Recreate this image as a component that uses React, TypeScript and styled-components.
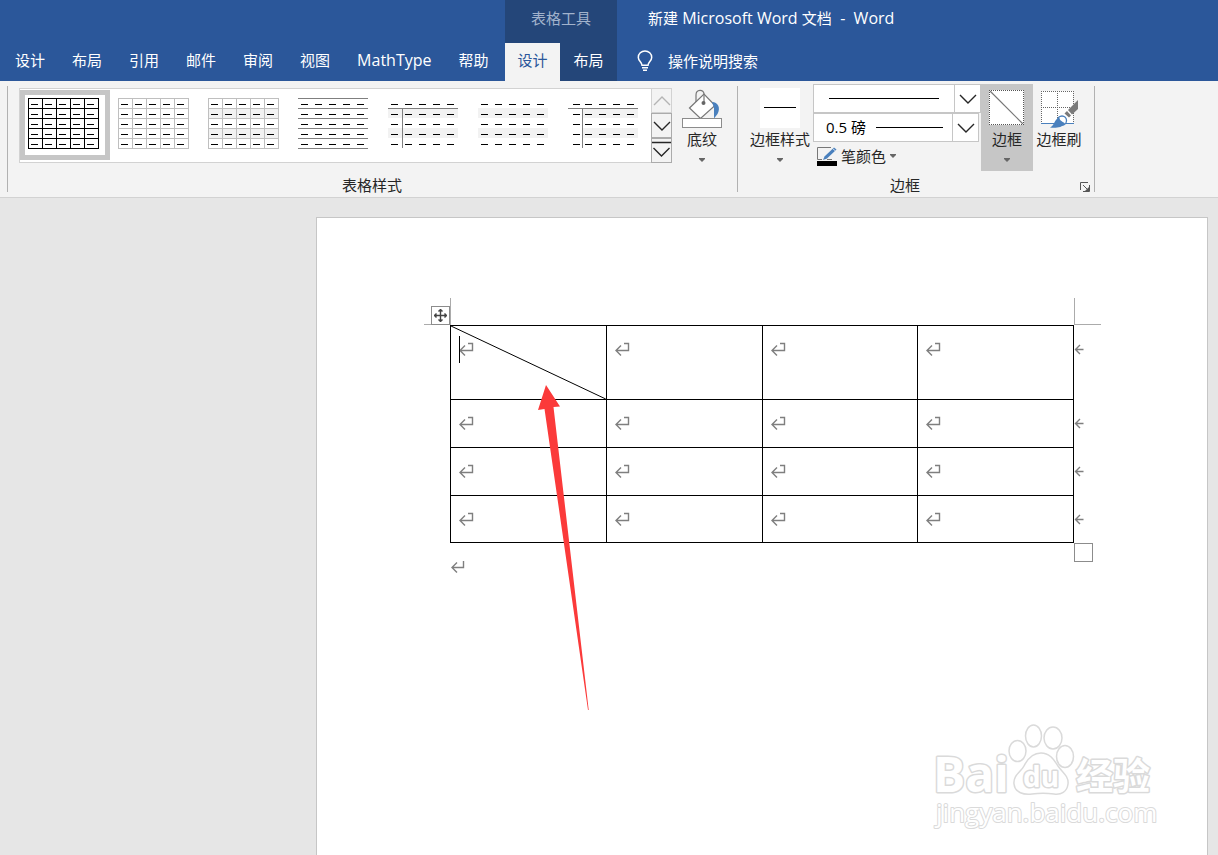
import React from 'react';
import styled, { createGlobalStyle, css } from 'styled-components';

const GlobalStyle = createGlobalStyle`
  *, *::before, *::after { box-sizing: border-box; }
  body {
    margin: 0;
    background: #e6e6e6;
    font-family: "Open Sans", "Noto Sans CJK SC", sans-serif;
    font-size: 15px;
    color: #262626;
  }
  button, select { font: inherit; color: inherit; }
  svg { display: block; }
`;

const AppFrame = styled.div`
  display: flex;
  flex-direction: column;
  min-height: 100vh;
`;

/* ---------- header ---------- */

const Header = styled.header`
  display: flex;
  height: 81px;
  background: #2b579a;
  color: #fff;
  white-space: nowrap;
`;

const TabList = styled.nav`
  display: flex;
  flex: 0 0 505px;
  align-self: flex-end;
  gap: 27px;
  padding-left: 15px;
`;

const Tab = styled.button<{ $active?: boolean; $width?: number }>`
  height: 38px;
  padding: 0 0 4px;
  border: 0;
  background: transparent;
  color: #fff;
  line-height: 20px;
  ${({ $width }) => $width && css`width: ${$width}px;`}
  ${({ $active }) => $active && css`
    background: #f3f3f3;
    color: #2b579a;
  `}
`;

const Latin = styled.span`
  font-size: 16px;
`;

const ContextGroup = styled.div`
  display: flex;
  flex-direction: column;
  flex: 0 0 112px;
  background: #244679;
`;

const ContextTitle = styled.div`
  height: 43px;
  padding-top: 8px;
  line-height: 20px;
  text-align: center;
  color: #a2b3cc;
`;

const ContextTabs = styled.div`
  display: flex;
`;

const TitleColumn = styled.div`
  flex: 1;
  min-width: 0;
`;

const DocTitle = styled.div`
  height: 43px;
  padding: 8px 0 0 31px;
  line-height: 20px;
  white-space: pre;
`;

const TellMe = styled.button`
  display: flex;
  align-items: center;
  gap: 15px;
  height: 38px;
  padding: 0 0 3px 20px;
  border: 0;
  background: transparent;
  color: #fff;
`;

/* ---------- ribbon ---------- */

const Ribbon = styled.div`
  display: flex;
  height: 117px;
  padding-left: 7px;
  background: #f3f3f3;
  border-bottom: 1px solid #d2d2d2;
  white-space: nowrap;
`;

const Separator = styled.div`
  flex: none;
  width: 1px;
  height: 106px;
  margin-top: 5px;
  background: #b1b1b1;
`;

const Group = styled.section<{ $start: number; $end: number }>`
  display: flex;
  flex-direction: column;
  flex: none;
  padding: 3px ${({ $end }) => $end}px 0 ${({ $start }) => $start}px;
`;

const GroupBody = styled.div`
  display: flex;
  height: 90px;
  padding-right: 5px;
`;

const GroupFooter = styled.div`
  display: flex;
  align-items: center;
  height: 22px;
  line-height: 20px;
`;

const GroupLabel = styled.div`
  flex: 1;
  padding-right: 12px;
  text-align: center;
`;

const Gallery = styled.div`
  display: flex;
  height: 75px;
  margin-top: 4px;
`;

const GalleryItems = styled.div`
  display: flex;
  padding: 1px 1px 0 0;
  border: 1px solid #d2d2d2;
  border-right: 0;
  background: #fff;
`;

const GalleryItem = styled.button<{ $selected: boolean }>`
  display: flex;
  align-items: flex-start;
  width: 90px;
  height: 70px;
  padding: 8px;
  border: 0;
  background: transparent;
  box-shadow: ${({ $selected }) => ($selected ? 'inset 0 0 0 5px #c6c6c6' : 'none')};
`;

const GalleryScroll = styled.div`
  display: flex;
  flex-direction: column;
  width: 21px;
`;

const ScrollButton = styled.button<{ $muted?: boolean }>`
  display: flex;
  align-items: center;
  justify-content: center;
  flex: 1;
  padding: 0;
  border: 1px solid ${({ $muted }) => ($muted ? '#d2d2d2' : '#ababab')};
  background: #f3f3f3;
  color: ${({ $muted }) => ($muted ? '#b4b4b4' : '#262626')};
`;

const BigButton = styled.button<{ $width: number; $pressed?: boolean }>`
  display: flex;
  flex-direction: column;
  align-items: center;
  width: ${({ $width }) => $width}px;
  height: 87px;
  padding: 4px 0 0;
  border: 0;
  background: ${({ $pressed }) => ($pressed ? '#c6c6c6' : 'transparent')};
`;

const BigLabel = styled.span`
  margin-bottom: 7px;
  line-height: 23px;
`;

const BorderSettings = styled.div`
  display: flex;
  flex-direction: column;
  align-items: flex-start;
  width: 168px;
  margin-left: 3px;
`;

const Combo = styled.div<{ $width: number }>`
  position: relative;
  width: ${({ $width }) => $width}px;
  height: 29px;
  border: 1px solid #c6c6c6;
  background: #fff;
`;

const ComboSelect = styled.select`
  width: 100%;
  height: 100%;
  padding: 0 0 2px 12px;
  border: 0;
  appearance: none;
  background: transparent;
  color: #000;
`;

const ComboLine = styled.div<{ $width: number; $right: number }>`
  position: absolute;
  top: 13px;
  right: ${({ $right }) => $right}px;
  width: ${({ $width }) => $width}px;
  height: 1px;
  background: #000;
  pointer-events: none;
`;

const ComboArrow = styled.div`
  position: absolute;
  top: 0;
  right: 0;
  display: flex;
  align-items: center;
  justify-content: center;
  width: 26px;
  height: 100%;
  border-left: 1px solid #c6c6c6;
  pointer-events: none;
`;

const PenButton = styled.button`
  display: flex;
  align-items: center;
  gap: 4px;
  height: 28px;
  padding: 0 0 0 4px;
  border: 0;
  background: transparent;
  line-height: 20px;
`;

const Launcher = styled.button`
  padding: 0;
  margin: 4px 0 0 8px;
  border: 0;
  background: transparent;
`;

/* ---------- document ---------- */

const Workspace = styled.main`
  display: flex;
  flex: 1;
  padding: 19px 10px 0 316px;
`;

const Page = styled.article`
  position: relative;
  flex: 1;
  min-width: 0;
  padding: 107px 133px 0;
  border: 1px solid #c6c6c6;
  border-bottom: 0;
  background: #fff;
`;

const TableWrap = styled.div`
  position: relative;
`;

const DocTable = styled.table`
  width: 100%;
  border-collapse: collapse;
  table-layout: fixed;
`;

const Row = styled.tr<{ $height: number }>`
  height: ${({ $height }) => $height}px;
`;

const Cell = styled.td`
  position: relative;
  padding: 16px 0 0 8px;
  border: 1px solid #000;
  vertical-align: top;
`;

const Diagonal = styled.svg`
  position: absolute;
  inset: 0;
  width: 100%;
  height: 100%;
`;

const Caret = styled.div`
  position: absolute;
  top: 10px;
  left: 8px;
  width: 1px;
  height: 27px;
  background: #000;
`;

const RowEnd = styled.div`
  position: absolute;
  top: 17px;
  left: 100%;
  padding-left: 1px;
`;

const CornerMark = styled.div<{ $side: 'left' | 'right' }>`
  position: absolute;
  bottom: 100%;
  width: 27px;
  height: 27px;
  border-bottom: 1px solid #ababab;
  ${({ $side }) => ($side === 'left'
    ? css`right: calc(100% - 1px); border-right: 1px solid #ababab;`
    : css`left: 100%; border-left: 1px solid #ababab;`)}
`;

const MoveHandle = styled.button`
  position: absolute;
  right: 100%;
  bottom: 100%;
  width: 19px;
  height: 19px;
  padding: 2px;
  border: 1px solid #8c8c8c;
  background: #fff;
`;

const ResizeHandle = styled.div`
  position: absolute;
  top: 100%;
  left: 100%;
  width: 19px;
  height: 19px;
  border: 1px solid #8c8c8c;
  background: #fff;
`;

const Pointer = styled.svg`
  position: absolute;
  top: 60px;
  left: 88px;
  pointer-events: none;
`;

const AfterTable = styled.p`
  margin: 17px 0 0;
`;

const Watermark = styled.svg`
  position: absolute;
  right: 37px;
  bottom: 10px;
`;

/* ---------- drawings ---------- */

type Look = {
  name: string;
  line?: string;
  vertical?: boolean;
  banded?: boolean;
  split?: boolean;
  inset?: boolean;
};

const looks: Look[] = [
  { name: '网格型', line: '#000', vertical: true },
  { name: '网格型浅色', line: '#bfbfbf', vertical: true },
  { name: '无格式表格 1', line: '#bfbfbf', vertical: true, banded: true },
  { name: '无格式表格 2', line: '#7f7f7f' },
  { name: '无格式表格 3', banded: true, split: true },
  { name: '无格式表格 4', banded: true },
  { name: '无格式表格 5', banded: true, split: true, inset: true },
];

const steps = [0, 1, 2, 3, 4, 5];
const cells = [0, 1, 2, 3, 4];

const TablePreview = ({ look }: { look: Look }) => (
  <svg width="71" height="51" shapeRendering="crispEdges">
    {look.banded && [10, 30].map((y) => (
      <rect key={y} x={look.inset ? 15 : 0} y={y} width={look.inset ? 55 : 70} height="10" fill="#f2f2f2" />
    ))}
    {look.line && steps.map((i) => (
      <rect key={i} y={i * 10} width={look.vertical ? 71 : 70} height="1" fill={look.line} />
    ))}
    {look.vertical && steps.map((i) => (
      <rect key={i} x={i * 14} width="1" height="51" fill={look.line} />
    ))}
    {look.split && (
      <>
        <rect y="10" width="70" height="1" fill="#7f7f7f" />
        <rect x="14" y="10" width="1" height="40" fill="#7f7f7f" />
      </>
    )}
    {cells.map((r) => cells.map((c) => (
      <rect
        key={`${r}-${c}`}
        x={c * 14 + (look.inset && c === 0 ? 5 : 3)}
        y={r * 10 + 6}
        width="7"
        height="1"
        fill="#000"
      />
    )))}
  </svg>
);

const Chevron = ({ up }: { up?: boolean }) => (
  <svg width="18" height="10" fill="none" stroke="currentColor" strokeWidth="1.4">
    <path d={up ? 'M1 9L9 1L17 9' : 'M1 1L9 9L17 1'} />
  </svg>
);

const MoreChevron = () => (
  <svg width="19" height="21" fill="none" stroke="currentColor" strokeWidth="1.4">
    <path d="M0 2.500H19M1.500 8L9.500 16L17.500 8" />
  </svg>
);

const SmallArrow = () => (
  <svg width="6" height="4" fill="#666"><path d="M0 0H6V1L3 4L0 1Z" /></svg>
);

const Bulb = () => (
  <svg width="16" height="22" fill="none" stroke="#fff" strokeWidth="1.5">
    <path d="M5 15.2C5 12.4 1.3 11 1.3 7.4A6.7 6.5 0 0 1 14.7 7.4C14.7 11 11 12.4 11 15.2ZM5 17.7H11M6 20.2H10" />
  </svg>
);

const Bucket = () => (
  <svg width="40" height="40" fill="none">
    <path d="M7.500 20L22 6L33 17.500L18.500 30.500Z" fill="#fff" stroke="#777" strokeWidth="1.2" />
    <path d="M14 14V7C14 1 22 1 22 6V15" stroke="#777" strokeWidth="1.2" />
    <circle cx="21.500" cy="15" r="2" fill="#666" />
    <path d="M30 14C36 14 39 20 35.500 26L32 30.500V20Z" fill="#4a80bd" />
    <rect x="0.5" y="30.5" width="39" height="9" fill="#fff" stroke="#8c8c8c" />
  </svg>
);

const LineStyle = () => (
  <svg width="40" height="40" shapeRendering="crispEdges">
    <rect width="40" height="40" fill="#fff" />
    <rect x="4" y="19" width="32" height="1" fill="#000" />
  </svg>
);

const Pen = () => (
  <svg width="20" height="19" fill="none">
    <path d="M14 0.500H0.500V12.500H5M10 12.500H15" stroke="#777" />
    <path d="M6 13L7.500 9.500L17 0.500L19.500 2.500L10 11.500Z" fill="#4a80bd" />
    <path d="M15.500 1.500L18.500 4" stroke="#f3f3f3" strokeWidth="0.8" />
    <rect y="14" width="20" height="5" fill="#000" />
  </svg>
);

const BorderIcon = () => (
  <svg width="36" height="40" fill="none">
    <rect y="2" width="35" height="35" fill="#fff" />
    <path d="M0 2.500H35M0 36.500H35M0.500 2V37M34.500 2V37" stroke="#555" strokeDasharray="1 1" />
    <path d="M1 3L34 36" stroke="#777" strokeWidth="1.2" />
  </svg>
);

const PainterIcon = () => (
  <svg width="38" height="40" fill="none">
    <rect x="1" y="3" width="32" height="32" fill="#fff" />
    <path d="M1 3.500H34M1 19.500H34M1.500 3V35M17.500 3V35M33.500 3V35" stroke="#666" strokeDasharray="1 1" />
    <path d="M1 35.500H34" stroke="#4a80bd" strokeWidth="1.2" />
    <path d="M38 12L28 22L32 26.500L38 21Z" fill="#7a7a7a" />
    <path d="M27 23L31 27.500L29 29.500L24.500 25.500Z" fill="#7a7a7a" />
    <circle cx="22" cy="32.500" r="4.500" fill="#fff" stroke="#4a80bd" strokeWidth="1.3" />
    <path d="M10 39.500C15 37.500 14 31 19.500 29.500C19.500 33 23 33.500 25 35.500C22 40 15 40 10 39.500Z" fill="#4a80bd" />
  </svg>
);

const LauncherIcon = () => (
  <svg width="10" height="10" fill="none" stroke="#555">
    <path d="M0.500 8V0.500H8M3 3L8 8M9.500 3V9.500H3" />
    <path d="M9 5V9H5Z" fill="#555" stroke="none" />
  </svg>
);

const ReturnMark = () => (
  <svg width="15" height="14" fill="none" stroke="#7f7f7f" strokeWidth="1.4">
    <path d="M9 1.500H13.500V8.500H1M6 3.500L1 8.500L6 13.500" />
  </svg>
);

const ParagraphMark = () => (
  <svg width="15" height="14" fill="none" stroke="#7f7f7f" strokeWidth="1.4">
    <path d="M13.500 1V7.500H2M7 2.500L2 7.500L7 12.500" />
  </svg>
);

const EndMark = () => (
  <svg width="10" height="12" fill="none" stroke="#7f7f7f" strokeWidth="1.4">
    <path d="M9.500 6.500H1.500M6 2L1.500 6.500L6 11" />
  </svg>
);

const MoveIcon = () => (
  <svg width="13" height="13" fill="none" stroke="#444" strokeWidth="1.4">
    <path d="M6.500 0.500V12.500M0.500 6.500H12.500M4.500 2.500L6.500 0.500L8.500 2.500M4.500 10.500L6.500 12.500L8.500 10.500M2.500 4.500L0.500 6.500L2.500 8.500M10.500 4.500L12.500 6.500L10.500 8.500" />
  </svg>
);

const MarkText = styled.text<{ $light?: boolean }>`
  paint-order: stroke;
  font-family: "Open Sans", "Noto Sans CJK SC", sans-serif;
  font-weight: ${({ $light }) => ($light ? 400 : 700)};
  stroke-width: ${({ $light }) => ($light ? 2 : 3)}px;
  stroke-linejoin: round;
`;

const SiteLogo = () => (
  <Watermark width="250" height="130" fill="#fff" stroke="#dadada" strokeWidth="1.5">
    <ellipse cx="97.500" cy="36" rx="8.500" ry="10.500" />
    <ellipse cx="113.500" cy="21" rx="8" ry="11" />
    <ellipse cx="133" cy="23" rx="9" ry="11" />
    <ellipse cx="145" cy="41.500" rx="8.500" ry="11" />
    <path d="M121 38C130 38 134 45 138 51C142 57 149 61 148 69C147 77 141 80 134 79C127 78 119 78 112 79C104 80 95 78 94 69C93 60 101 57 104 51C107 45 112 38 121 38Z" />
    <MarkText x="13" y="77" fontSize="48">Bai</MarkText>
    <MarkText x="103" y="72" fontSize="28">du</MarkText>
    <MarkText x="156" y="75" fontSize="37">经验</MarkText>
    <MarkText $light x="16" y="107" fontSize="26">jingyan.baidu.com</MarkText>
  </Watermark>
);

/* ---------- app ---------- */

const tabs = ['设计', '布局', '引用', '邮件', '审阅', '视图', 'MathType', '帮助'];
const rowHeights = [74, 48, 48, 47];
const columns = [0, 1, 2, 3];

export default function App() {
  return (
    <AppFrame>
      <GlobalStyle />
      <Header>
        <TabList>
          {tabs.map((t) => (
            <Tab key={t}>{t === 'MathType' ? <Latin>{t}</Latin> : t}</Tab>
          ))}
        </TabList>
        <ContextGroup>
          <ContextTitle>表格工具</ContextTitle>
          <ContextTabs>
            <Tab $width={55} $active>设计</Tab>
            <Tab $width={57}>布局</Tab>
          </ContextTabs>
        </ContextGroup>
        <TitleColumn>
          <DocTitle>新建<Latin> Microsoft Word </Latin>文档<Latin>{'  -  Word'}</Latin></DocTitle>
          <TellMe><Bulb />操作说明搜索</TellMe>
        </TitleColumn>
      </Header>

      <Ribbon>
        <Separator />
        <Group $start={11} $end={0}>
          <GroupBody>
            <Gallery>
              <GalleryItems>
                {looks.map((look, i) => (
                  <GalleryItem key={look.name} $selected={i === 0} aria-label={look.name}>
                    <TablePreview look={look} />
                  </GalleryItem>
                ))}
              </GalleryItems>
              <GalleryScroll>
                <ScrollButton $muted aria-label="上一行"><Chevron up /></ScrollButton>
                <ScrollButton aria-label="下一行"><Chevron /></ScrollButton>
                <ScrollButton aria-label="其他"><MoreChevron /></ScrollButton>
              </GalleryScroll>
            </Gallery>
            <BigButton $width={60}>
              <Bucket />
              <BigLabel>底纹</BigLabel>
              <SmallArrow />
            </BigButton>
          </GroupBody>
          <GroupFooter><GroupLabel>表格样式</GroupLabel></GroupFooter>
        </Group>
        <Separator />
        <Group $start={12} $end={4}>
          <GroupBody>
            <BigButton $width={60}>
              <LineStyle />
              <BigLabel>边框样式</BigLabel>
              <SmallArrow />
            </BigButton>
            <BorderSettings>
              <Combo $width={168}>
                <ComboSelect aria-label="笔样式"><option aria-label="单实线" /></ComboSelect>
                <ComboLine $width={110} $right={41} />
                <ComboArrow><Chevron /></ComboArrow>
              </Combo>
              <Combo $width={166}>
                <ComboSelect aria-label="笔划粗细"><option>0.5 磅</option></ComboSelect>
                <ComboLine $width={67} $right={35} />
                <ComboArrow><Chevron /></ComboArrow>
              </Combo>
              <PenButton><Pen />笔颜色<SmallArrow /></PenButton>
            </BorderSettings>
            <BigButton $width={52} $pressed>
              <BorderIcon />
              <BigLabel>边框</BigLabel>
              <SmallArrow />
            </BigButton>
            <BigButton $width={52}>
              <PainterIcon />
              <BigLabel>边框刷</BigLabel>
            </BigButton>
          </GroupBody>
          <GroupFooter>
            <GroupLabel>边框</GroupLabel>
            <Launcher aria-label="边框和底纹"><LauncherIcon /></Launcher>
          </GroupFooter>
        </Group>
        <Separator />
      </Ribbon>

      <Workspace>
        <Page>
          <TableWrap>
            <DocTable>
              <tbody>
                {rowHeights.map((h, r) => (
                  <Row key={r} $height={h}>
                    {columns.map((c) => (
                      <Cell key={c}>
                        {r === 0 && c === 0 && (
                          <>
                            <Diagonal><line x2="100%" y2="100%" stroke="#000" /></Diagonal>
                            <Caret />
                          </>
                        )}
                        <ReturnMark />
                        {c === 3 && <RowEnd><EndMark /></RowEnd>}
                      </Cell>
                    ))}
                  </Row>
                ))}
              </tbody>
            </DocTable>
            <CornerMark $side="left" />
            <CornerMark $side="right" />
            <MoveHandle aria-label="移动表格"><MoveIcon /></MoveHandle>
            <ResizeHandle />
            <Pointer width="52" height="326">
              <path d="M8 0L22 21.500L15.500 22L50.700 325H50L6.500 24L0 25Z" fill="#fb3a3a" />
            </Pointer>
          </TableWrap>
          <AfterTable><ParagraphMark /></AfterTable>
          <SiteLogo />
        </Page>
      </Workspace>
    </AppFrame>
  );
}
